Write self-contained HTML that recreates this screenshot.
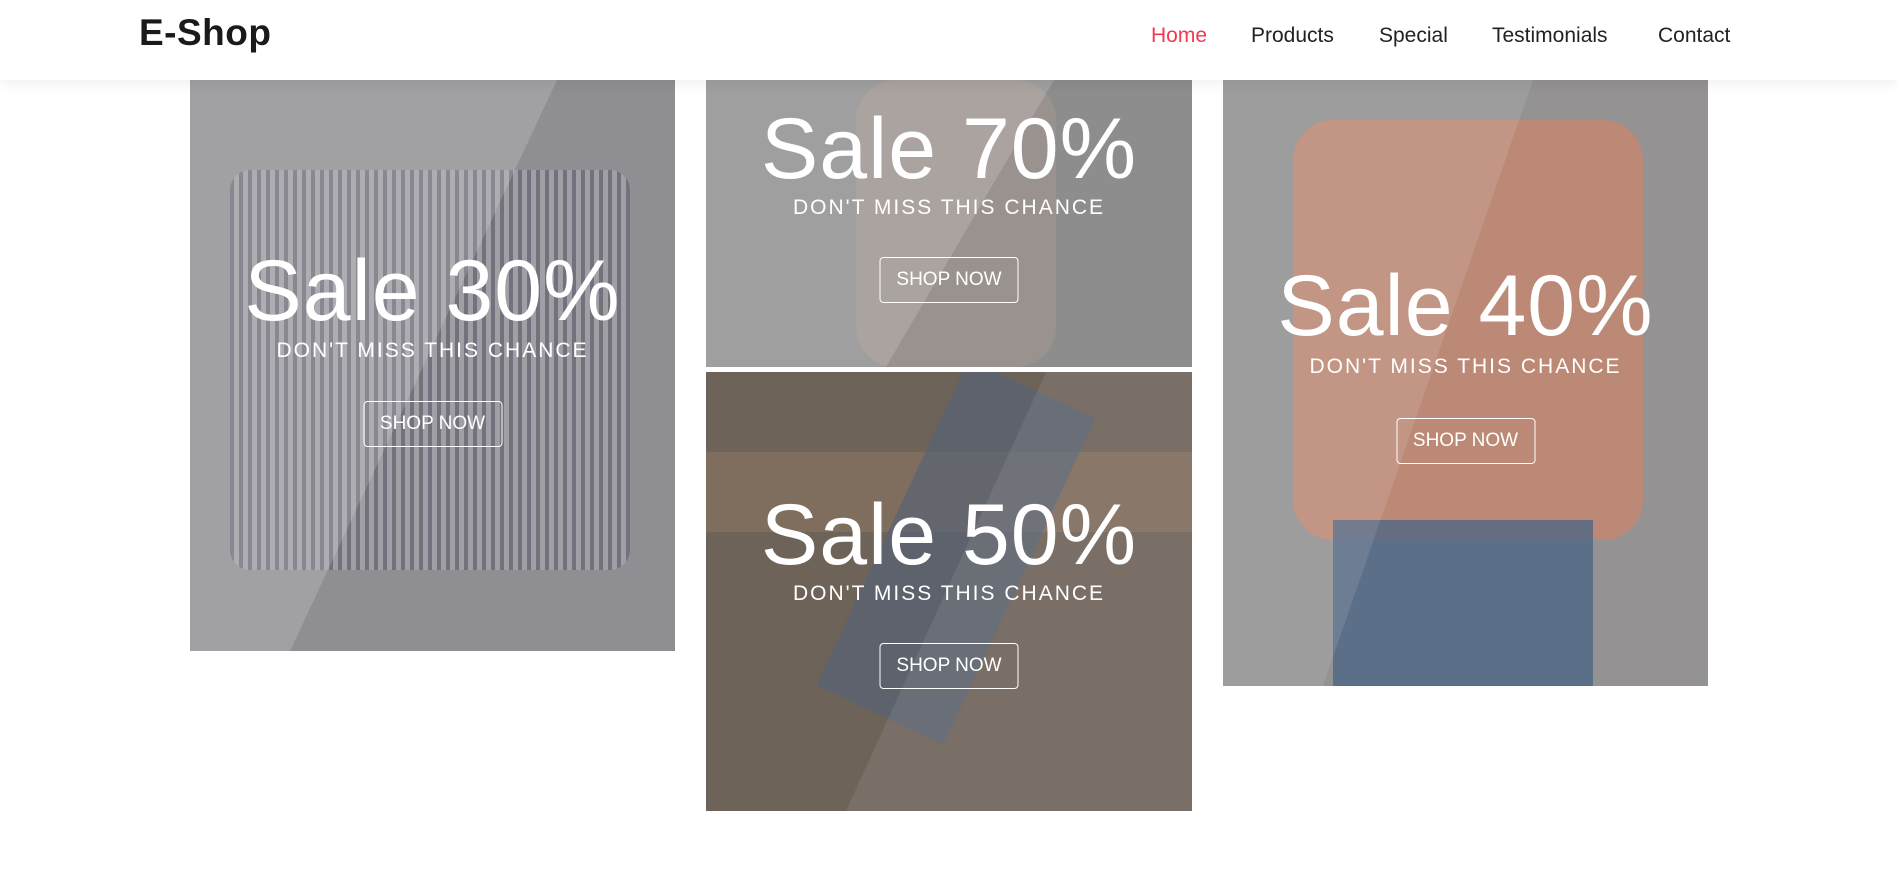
<!DOCTYPE html>
<html><head><meta charset="utf-8"><style>
*{margin:0;padding:0;box-sizing:border-box}
body{width:1898px;height:887px;background:#fff;font-family:"Liberation Sans",sans-serif;position:relative;overflow:hidden}
.nav{position:absolute;left:0;top:0;width:1898px;height:80px;background:#fff;box-shadow:0 4px 12px rgba(0,0,0,.06);z-index:5}
.logo{position:absolute;left:139px;top:12px;font-size:37px;font-weight:bold;color:#1a1a1a;letter-spacing:0.5px}
.menu{position:absolute;top:24px;font-size:21px;color:#222}
.card{position:absolute;overflow:hidden;color:#fff;text-align:center}
.card .t{position:absolute;left:0;width:100%;font-size:86px;line-height:1;letter-spacing:1px}
.card .s{position:absolute;left:0;width:100%;font-size:21px;letter-spacing:2px}
.card .b{position:absolute;left:50%;transform:translateX(-50%);width:139px;height:46px;border:1px solid #fff;border-radius:4px;font-size:19px;line-height:44px}
.lt{position:absolute;left:0;top:0;width:100%;height:100%;background:rgba(255,255,255,.16)}
</style></head><body>
<div class="nav">
<div class="logo">E-Shop</div>
<div class="menu" style="left:1151px;color:#f4394f">Home</div>
<div class="menu" style="left:1251px">Products</div>
<div class="menu" style="left:1379px">Special</div>
<div class="menu" style="left:1492px">Testimonials</div>
<div class="menu" style="left:1658px">Contact</div>
</div>

<div class="card" style="left:190px;top:80px;width:485px;height:571px;background:#8f8f93">
<div style="position:absolute;left:40px;top:90px;width:400px;height:400px;background:repeating-linear-gradient(90deg,#55556a 0 4px,#b0b0b6 4px 9px);opacity:.5;border-radius:20px"></div>
<div class="lt" style="clip-path:polygon(0 0,367px 0,100px 571px,0 571px)"></div>
<div class="t" style="top:168px">Sale 30%</div>
<div class="s" style="top:259px">DON'T MISS THIS CHANCE</div>
<div class="b" style="top:321px">SHOP NOW</div>
</div>

<div class="card" style="left:706px;top:80px;width:486px;height:287px;background:#8d8d8d">
<div style="position:absolute;left:150px;top:0;width:200px;height:287px;background:#a49690;opacity:.6;border-radius:40px"></div>
<div class="lt" style="clip-path:polygon(0 0,348px 0,180px 287px,0 287px)"></div>
<div class="t" style="top:26px">Sale 70%</div>
<div class="s" style="top:116px">DON'T MISS THIS CHANCE</div>
<div class="b" style="top:177px">SHOP NOW</div>
</div>

<div class="card" style="left:706px;top:372px;width:486px;height:439px;background:#6e6359">
<div style="position:absolute;left:0;top:80px;width:486px;height:80px;background:#8a7560;opacity:.6"></div>
<div style="position:absolute;left:180px;top:0;width:140px;height:360px;background:#52627a;opacity:.6;transform:rotate(25deg)"></div>
<div class="lt" style="background:rgba(255,255,255,.08);clip-path:polygon(340px 0,486px 0,486px 439px,140px 439px)"></div>
<div class="t" style="top:120px">Sale 50%</div>
<div class="s" style="top:210px">DON'T MISS THIS CHANCE</div>
<div class="b" style="top:271px">SHOP NOW</div>
</div>

<div class="card" style="left:1223px;top:80px;width:485px;height:606px;background:#949292">
<div style="position:absolute;left:70px;top:40px;width:350px;height:420px;background:#c9866c;opacity:.75;border-radius:40px"></div>
<div style="position:absolute;left:110px;top:440px;width:260px;height:170px;background:#4e6786;opacity:.8"></div>
<div class="lt" style="background:rgba(255,255,255,.1);clip-path:polygon(0 0,310px 0,100px 606px,0 606px)"></div>
<div class="t" style="top:183px">Sale 40%</div>
<div class="s" style="top:275px">DON'T MISS THIS CHANCE</div>
<div class="b" style="top:338px">SHOP NOW</div>
</div>
</body></html>
